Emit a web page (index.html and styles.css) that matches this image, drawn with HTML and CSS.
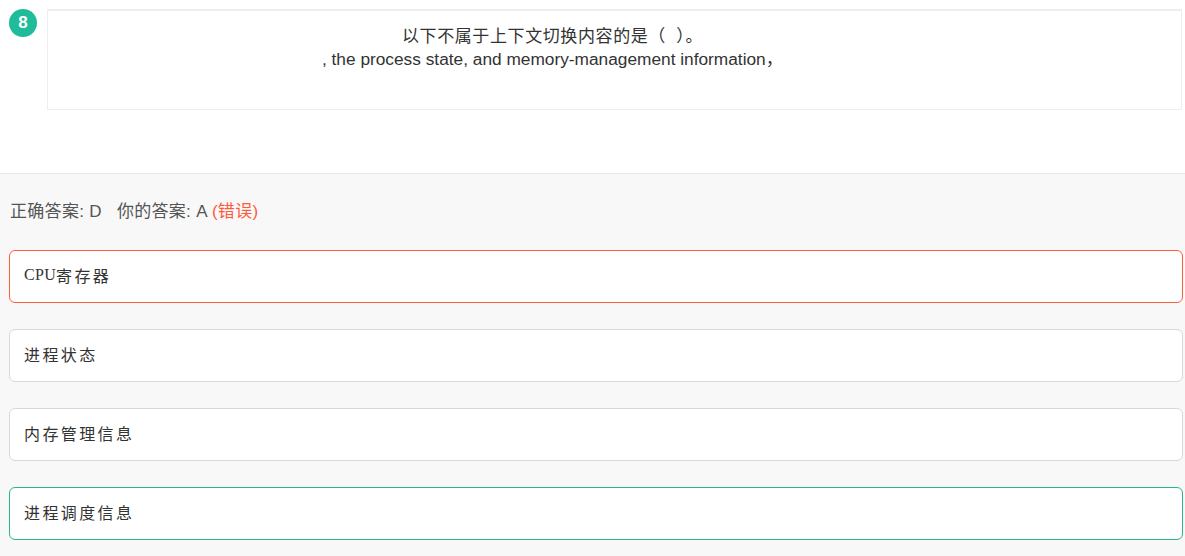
FILE: index.html
```html
<!DOCTYPE html>
<html lang="zh">
<head>
<meta charset="utf-8">
<link rel="stylesheet" href="styles.css">
</head>
<body>
<section class="question">
  <div class="badge">8</div>
  <div class="stem">
    <p class="stem-zh">以下不属于上下文切换内容的是（ ）。</p>
    <p class="stem-en">, the process state, and memory-management information，</p>
  </div>
</section>
<section class="answers">
  <p class="result">正确答案: D&nbsp;&nbsp;&nbsp;你的答案: A <span class="wrong">(错误)</span></p>
  <ul class="options">
    <li class="option option-wrong"><span class="latin">CPU</span>寄存器</li>
    <li class="option">进程状态</li>
    <li class="option">内存管理信息</li>
    <li class="option option-right">进程调度信息</li>
  </ul>
</section>
</body>
</html>
```
FILE: styles.css
```css
* { box-sizing: border-box; }
html, body { margin: 0; padding: 0; }
body {
  background: #fff;
  font-family: "Liberation Sans", Arial, "Noto Sans CJK SC", sans-serif;
  color: #333;
  font-size: 16px;
}
.question {
  display: flex;
  align-items: flex-start;
  gap: 10px;
  padding: 9px 3px 0 9px;
  height: 173px;
  background: #fff;
}
.badge {
  flex: 0 0 28px;
  width: 28px;
  height: 28px;
  border-radius: 50%;
  background: #1ebc9b;
  color: #fff;
  font-size: 17px;
  font-weight: bold;
  line-height: 28px;
  text-align: center;
}
.stem {
  flex: 1;
  height: 101px;
  border: 1px solid #eee;
  border-top-width: 2px;
  padding: 11px 124px 0 0;
  text-align: center;
}
.stem p { margin: 0; line-height: 25px; }
.stem-zh {
  font-family: "Noto Sans CJK SC", sans-serif;
  font-size: 17px;
  letter-spacing: 0.6px;
  word-spacing: 6px;
}
.stem-en { font-size: 17.3px; }
.answers {
  background: #f8f8f8;
  border-top: 1px solid #ebebeb;
  padding: 26px 2px 16px 9px;
}
.result {
  margin: 0 0 0 1px;
  line-height: 24px;
  color: #555;
  font-size: 17px;
  letter-spacing: 0.3px;
}
.wrong { color: #ff5a3d; }
.options {
  list-style: none;
  margin: 26px 0 0;
  padding: 0;
  display: flex;
  flex-direction: column;
  gap: 26px;
}
.option {
  height: 53px;
  display: flex;
  align-items: center;
  padding: 0 0 3px 14px;
  background: #fff;
  border: 1px solid #d8d8d8;
  border-radius: 6px;
  font-family: "Liberation Serif", "Noto Sans CJK SC", serif;
  font-size: 16px;
  letter-spacing: 2.4px;
  color: #333;
}
.latin { letter-spacing: 0.3px; }
.option-wrong { border-color: #ff5e3c; }
.option-right { border-color: #2db38f; }
```
